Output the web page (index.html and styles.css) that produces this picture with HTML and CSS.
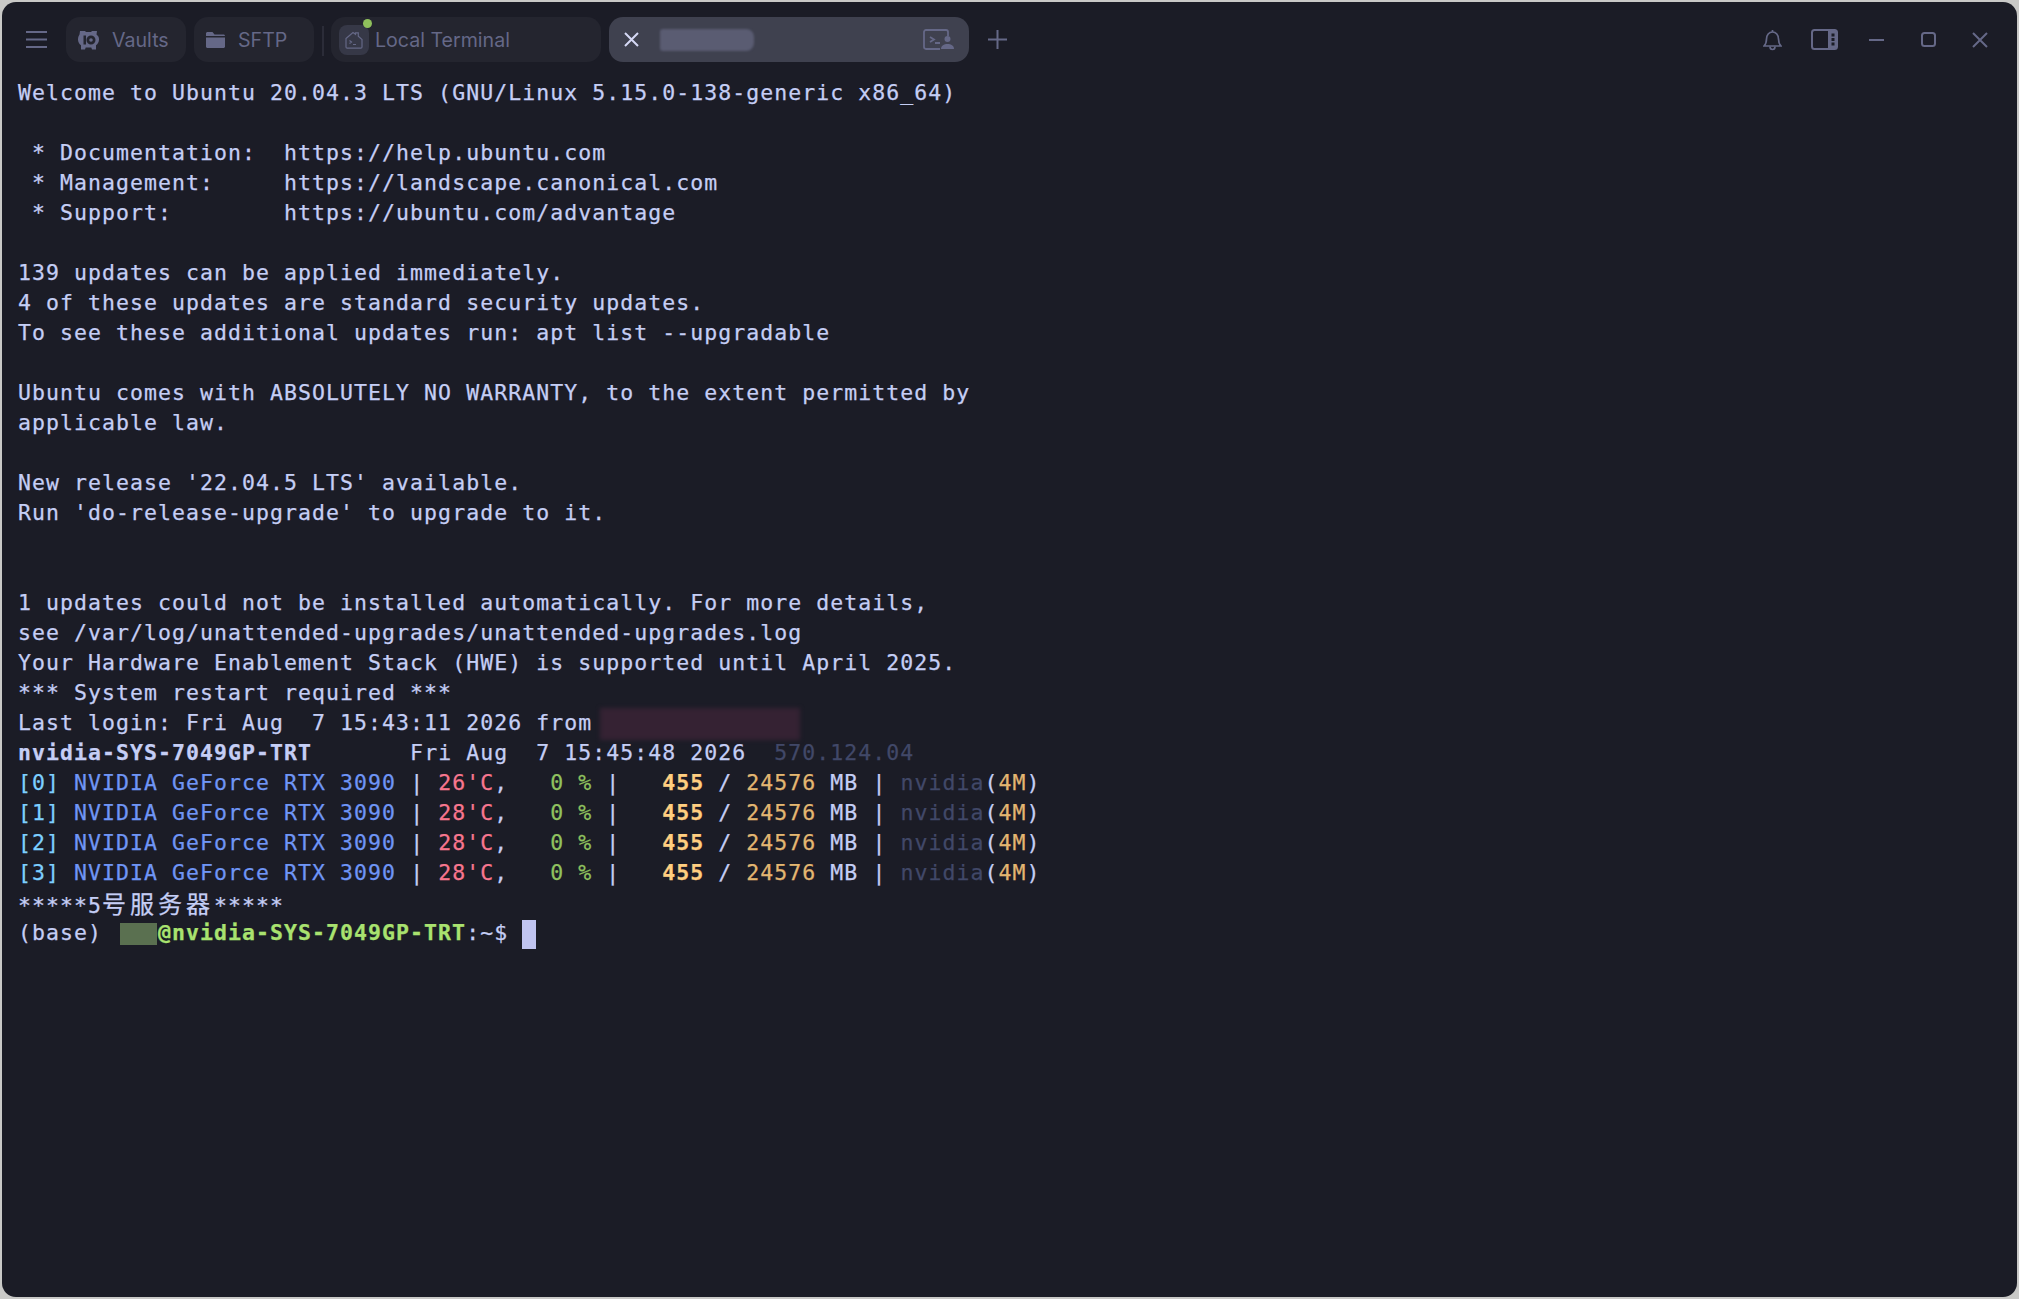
FILE: index.html
```html
<!DOCTYPE html>
<html lang="en">
<head>
    <meta charset="UTF-8">
    <title>Termius</title>
    <link rel="stylesheet" href="styles.css">
</head>
<body>
    <div class="window">
        <header class="titlebar">
            <div class="menu">
                <svg width="21" height="17" viewBox="0 0 21 17" fill="none" stroke="#656887" stroke-width="2"><path d="M0 1h21M0 8.500h21M0 16h21"/></svg>
            </div>
            <div class="tab tab-nav">
                <svg class="tab-icon" width="21" height="20" viewBox="0 0 21 20"><path fill="#656887" fill-rule="evenodd" d="M2 1h5l1 1h5l1-1h5l-.5 3.500C20.500 6 21 7.500 21 9.500c0 2.500-1.200 4.500-3 5.800V19.500h-4l-.7-2H7.700l-.7 2H3v-4.200C1.200 14 0 12 0 9.500 0 7.500.5 6 1.500 4.500zM13 5.500a4.500 4.500 0 1 0 0 9 4.500 4.500 0 0 0 0-9zm0 2.700a1.800 1.800 0 1 1 0 3.600 1.800 1.800 0 0 1 0-3.600zM5.500 5.500H8v9H5.500z"/></svg>
                <span>Vaults</span>
            </div>
            <div class="tab tab-nav">
                <svg class="tab-icon" width="19" height="16" viewBox="0 0 19 16"><path fill="#656887" d="M0 1.500C0 .7.700 0 1.500 0h5l2 2.500h9c.8 0 1.500.7 1.500 1.500H0zM0 5.500h19v9c0 .8-.7 1.500-1.500 1.500h-16C.7 16 0 15.300 0 14.500z"/></svg>
                <span>SFTP</span>
            </div>
            <div class="divider"></div>
            <div class="tab tab-local">
                <div class="local-icon">
                    <svg width="20" height="20" viewBox="0 0 20 20" fill="none" stroke="#656887" stroke-width="1.200"><path d="M2 8.500 9 2.500l2.500 1.800V2.800h2.800v3.500L18 9.500V17c0 .8-.5 1.200-1.200 1.200H3.200C2.500 18.200 2 17.800 2 17z"/><path d="m5.500 10.500 2 1.500-2 1.500M9 14.500h3"/></svg>
                    <span class="status-dot"></span>
                </div>
                <span>Local Terminal</span>
            </div>
            <div class="tab tab-active">
                <svg width="15" height="15" viewBox="0 0 15 15" fill="none" stroke="#d5d8f5" stroke-width="2"><path d="m1 1 13 13M14 1 1 14"/></svg>
                <div class="tab-blur"></div>
                <svg class="tab-end" width="31" height="21" viewBox="0 0 31 21" fill="none" stroke="#656887" stroke-width="1.800"><path d="M17 20H3c-1.200 0-2-.8-2-2V3c0-1.200.8-2 2-2h20c1.200 0 2 .8 2 2v4"/><path d="m7 8 4 2.500L7 13M12 14h5"/><circle cx="24.500" cy="10" r="3" fill="#656887" stroke="none"/><path d="M18 20c0-3.500 3-5 6.500-5s6.500 1.500 6.500 5z" fill="#656887" stroke="none"/></svg>
            </div>
            <div class="add-tab">
                <svg width="19" height="19" viewBox="0 0 19 19" fill="none" stroke="#656887" stroke-width="2"><path d="M9.500 0v19M0 9.500h19"/></svg>
            </div>
            <div class="controls">
                <div class="control">
                    <svg width="19" height="22" viewBox="0 0 19 22" fill="none" stroke="#656887" stroke-width="1.700"><path d="M1 17c2-2 2.500-3 2.500-7 0-4 2.500-7 6-7s6 3 6 7c0 4 .5 5 2.500 7z"/><path d="M9.500 3V1M7 17.500c0 2 1.200 3 2.500 3s2.500-1 2.500-3"/></svg>
                </div>
                <div class="control">
                    <svg width="27" height="21" viewBox="0 0 27 21"><rect x="1" y="1" width="25" height="19" rx="2.500" fill="none" stroke="#656887" stroke-width="2"/><path fill="#656887" d="M17 1h7c1 0 2 1 2 2v15c0 1-1 2-2 2h-7z"/><path fill="#1b1c26" d="M20.500 4.500h3v3h-3zM20.500 9h3v3h-3zM20.500 13.500h3v3h-3z"/></svg>
                </div>
                <div class="control">
                    <svg width="15" height="2" viewBox="0 0 15 2"><path stroke="#656887" stroke-width="2" d="M0 1h15"/></svg>
                </div>
                <div class="control">
                    <svg width="15" height="15" viewBox="0 0 15 15"><rect x="1" y="1" width="13" height="13" rx="2.500" fill="none" stroke="#656887" stroke-width="2"/></svg>
                </div>
                <div class="control">
                    <svg width="16" height="16" viewBox="0 0 16 16" fill="none" stroke="#656887" stroke-width="2"><path d="m1 1 14 14M15 1 1 15"/></svg>
                </div>
            </div>
        </header>

        <main class="terminal">
            <div class="line">Welcome to Ubuntu 20.04.3 LTS (GNU/Linux 5.15.0-138-generic x86_64)</div>
            <div class="line"></div>
            <div class="line"> * Documentation:  https://help.ubuntu.com</div>
            <div class="line"> * Management:     https://landscape.canonical.com</div>
            <div class="line"> * Support:        https://ubuntu.com/advantage</div>
            <div class="line"></div>
            <div class="line">139 updates can be applied immediately.</div>
            <div class="line">4 of these updates are standard security updates.</div>
            <div class="line">To see these additional updates run: apt list --upgradable</div>
            <div class="line"></div>
            <div class="line">Ubuntu comes with ABSOLUTELY NO WARRANTY, to the extent permitted by</div>
            <div class="line">applicable law.</div>
            <div class="line"></div>
            <div class="line">New release '22.04.5 LTS' available.</div>
            <div class="line">Run 'do-release-upgrade' to upgrade to it.</div>
            <div class="line"></div>
            <div class="line"></div>
            <div class="line">1 updates could not be installed automatically. For more details,</div>
            <div class="line">see /var/log/unattended-upgrades/unattended-upgrades.log</div>
            <div class="line">Your Hardware Enablement Stack (HWE) is supported until April 2025.</div>
            <div class="line">*** System restart required ***</div>
            <div class="line">Last login: Fri Aug  7 15:43:11 2026 from <span class="ip-mask"></span></div>
            <div class="line"><b>nvidia-SYS-7049GP-TRT</b>       Fri Aug  7 15:45:48 2026  <span class="dim">570.124.04</span></div>
            <div class="line"><span class="cyan">[0]</span> <span class="blue">NVIDIA GeForce RTX 3090</span> <span class="rule">|</span> <span class="red">26'C</span>,   <span class="green">0 %</span> |   <b class="amber">455</b> / <span class="yellow">24576</span> MB | <span class="dim">nvidia</span>(<span class="yellow">4M</span>)</div>
            <div class="line"><span class="cyan">[1]</span> <span class="blue">NVIDIA GeForce RTX 3090</span> <span class="rule">|</span> <span class="red">28'C</span>,   <span class="green">0 %</span> |   <b class="amber">455</b> / <span class="yellow">24576</span> MB | <span class="dim">nvidia</span>(<span class="yellow">4M</span>)</div>
            <div class="line"><span class="cyan">[2]</span> <span class="blue">NVIDIA GeForce RTX 3090</span> <span class="rule">|</span> <span class="red">28'C</span>,   <span class="green">0 %</span> |   <b class="amber">455</b> / <span class="yellow">24576</span> MB | <span class="dim">nvidia</span>(<span class="yellow">4M</span>)</div>
            <div class="line"><span class="cyan">[3]</span> <span class="blue">NVIDIA GeForce RTX 3090</span> <span class="rule">|</span> <span class="red">28'C</span>,   <span class="green">0 %</span> |   <b class="amber">455</b> / <span class="yellow">24576</span> MB | <span class="dim">nvidia</span>(<span class="yellow">4M</span>)</div>
            <div class="line">*****5<span class="cjk">号服务器</span>*****</div>
            <div class="line">(base) <span class="user-mask"></span><b class="prompt">@nvidia-SYS-7049GP-TRT</b>:~$ <span class="cursor"></span></div>
        </main>
    </div>
</body>
</html>
```

FILE: styles.css
```css
/* ===== General ===== */
* {
    box-sizing: border-box;
}

body {
    margin: 0;
    height: 100vh;
    padding: 2px;
    background: #c9c9c7;
    overflow: hidden;
}

.window {
    height: 100%;
    background: #1b1c26;
    border-radius: 14px;
    overflow: hidden;
    display: flex;
    flex-direction: column;
}

/* ===== Title bar ===== */
.titlebar {
    height: 76px;
    padding-top: 15px;
    display: flex;
    align-items: flex-start;
    flex-shrink: 0;
    font-family: Inter, "Liberation Sans", sans-serif;
    font-size: 19.6px;
    color: #656887;
}

.menu {
    width: 64px;
    height: 45px;
    display: flex;
    align-items: center;
    padding-left: 24px;
}

.tab {
    height: 45px;
    border-radius: 14px;
    background: #24252f;
    display: flex;
    align-items: center;
    margin-right: 8px;
}

.tab-nav {
    width: 120px;
    padding-left: 12px;
}

.tab-icon {
    margin-right: 13px;
}

.divider {
    width: 2px;
    height: 30px;
    margin: 9px 7px 0 0;
    background: #2b2c38;
}

.tab-local {
    width: 270px;
    padding-left: 8px;
    gap: 6px;
}

.local-icon {
    position: relative;
    width: 30px;
    height: 30px;
    border-radius: 8px;
    background: #363847;
    display: flex;
    align-items: center;
    justify-content: center;
}

.status-dot {
    position: absolute;
    top: -6px;
    right: -3px;
    width: 9px;
    height: 9px;
    border-radius: 50%;
    background: #8fc05c;
}

.tab-active {
    width: 360px;
    padding: 0 15px;
    background: #3f414f;
}

.tab-blur {
    width: 94px;
    height: 22px;
    margin-left: 21px;
    border-radius: 3px 8px 8px 3px;
    background: #5a5c72;
    filter: blur(1px);
}

.tab-end {
    margin-left: auto;
}

.add-tab {
    height: 45px;
    margin-left: 11px;
    display: flex;
    align-items: center;
}

.controls {
    margin-left: auto;
    height: 45px;
    padding-right: 11px;
    display: flex;
}

.control {
    width: 52px;
    display: flex;
    align-items: center;
    justify-content: center;
}

/* ===== Terminal ===== */
.terminal {
    padding-left: 16px;
    font-family: "DejaVu Sans Mono", "Noto Sans CJK SC", monospace;
    font-size: 21.5px;
    letter-spacing: 1.06px;
    -webkit-text-stroke: 0.25px;
    color: #c5cef5;
}

.line {
    height: 30px;
    line-height: 30px;
    white-space: pre;
}

.cyan { color: #7dcfff; }
.blue { color: #6f95f5; }
.red { color: #f7768e; }
.green { color: #8fc25f; }
.yellow { color: #e3b671; }
.amber { color: #ffcf80; }
.dim { color: #414868; }
.rule { color: #c5cef5; }
.prompt { color: #a9e26f; }

.cjk {
    font-family: "Noto Sans CJK SC", sans-serif;
    font-size: 24px;
    letter-spacing: 4px;
}

/* redacted bits */
.ip-mask {
    display: inline-block;
    width: 200px;
    height: 32px;
    margin-left: -6px;
    vertical-align: middle;
    background: #352233;
    filter: blur(2px);
}

.user-mask {
    display: inline-block;
    width: 37px;
    height: 22px;
    margin-left: 4px;
    margin-right: 1px;
    vertical-align: middle;
    background: #5a7050;
}

.cursor {
    display: inline-block;
    width: 14px;
    height: 29px;
    vertical-align: middle;
    background: #c0c4f0;
}
```
